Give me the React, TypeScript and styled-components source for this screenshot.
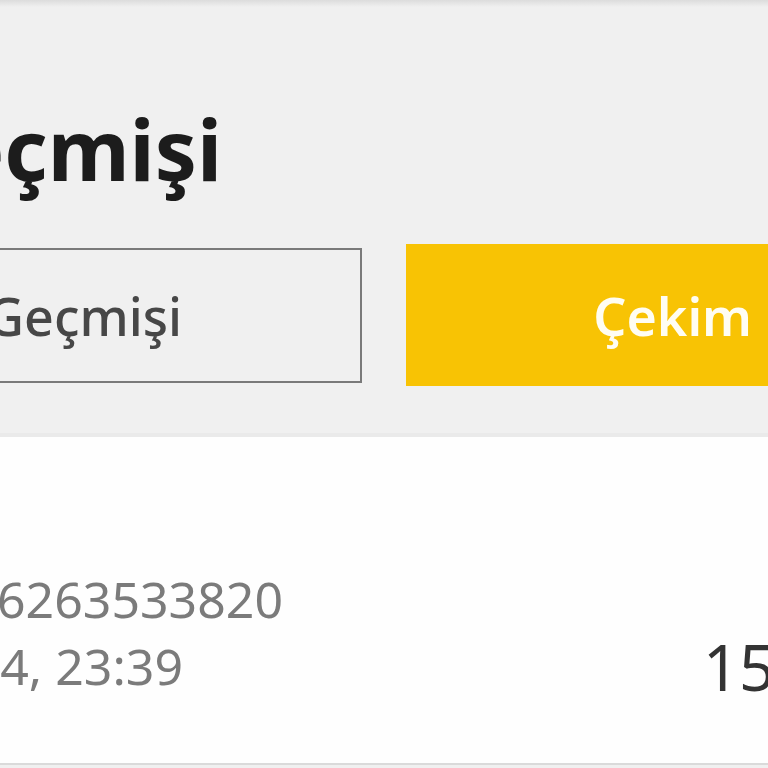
import React from "react";
import styled, { createGlobalStyle } from "styled-components";

const GlobalStyle = createGlobalStyle`
    html, body {
        margin: 0;
        padding: 0;
        background: #f0f0f0;
        overflow: hidden;
    }
    body {
        font-family: "Noto Sans", "Open Sans", sans-serif;
    }
`;

const Page = styled.div`
    width: 768px;
    height: 768px;
    overflow: hidden;
    background: #f0f0f0;
`;

const Header = styled.header`
    padding: 99px 0 47px;
    background: linear-gradient(to bottom, #dcdcdc 0px, #f0f0f0 7px, #f0f0f0 100%);
    border-bottom: 4px solid #eaeaea;
`;

const TitleBox = styled.div`
    width: 222px;
    display: flex;
    justify-content: flex-end;
`;

const Title = styled.h1`
    margin: 0;
    font-size: 84px;
    line-height: 100px;
    font-weight: 700;
    color: #1c1c1c;
    white-space: nowrap;
`;

const Tabs = styled.div`
    margin: 45px 0 0 -384px;
    display: flex;
    align-items: center;
    gap: 44px;
`;

const Tab = styled.button<{ $active?: boolean }>`
    flex: 0 0 746px;
    height: ${(p) => (p.$active ? "142px" : "135px")};
    display: flex;
    align-items: center;
    justify-content: center;
    font-family: inherit;
    font-size: 52px;
    font-weight: ${(p) => (p.$active ? 600 : 500)};
    white-space: nowrap;
    color: ${(p) => (p.$active ? "#fffdf2" : "#474747")};
    background: ${(p) => (p.$active ? "#f8c304" : "transparent")};
    border: ${(p) => (p.$active ? "none" : "2px solid #7a7a7a")};
    border-radius: 0;
    padding: 0 0 0;
`;

const List = styled.section`
    background: #fefefe;
`;

const Row = styled.div`
    display: flex;
    align-items: flex-end;
    padding: 129px 0 63px;
    border-bottom: 2px solid #dadada;
`;

const Meta = styled.div`
    flex: 0 0 703px;
    display: flex;
    flex-direction: column;
`;

const MetaLine = styled.div<{ $end: number }>`
    width: ${(p) => p.$end}px;
    display: flex;
    justify-content: flex-end;
    font-size: 50px;
    line-height: 67px;
    color: #7b7b7b;
    white-space: nowrap;
`;

const Amount = styled.div`
    font-size: 63px;
    line-height: 76px;
    color: #333333;
    white-space: nowrap;
    margin-bottom: -5px;
`;

export default function App() {
    return (
        <Page>
            <GlobalStyle />
            <Header>
                <TitleBox>
                    <Title>İşlem Geçmişi</Title>
                </TitleBox>
                <Tabs>
                    <Tab>Yatırım Geçmişi</Tab>
                    <Tab $active>Çekim Geçmişi</Tab>
                </Tabs>
            </Header>
            <List>
                <Row>
                    <Meta>
                        <MetaLine $end={283}>1706263533820</MetaLine>
                        <MetaLine $end={183}>26.01.2024, 23:39</MetaLine>
                    </Meta>
                    <Amount>150 TL</Amount>
                </Row>
            </List>
        </Page>
    );
}
